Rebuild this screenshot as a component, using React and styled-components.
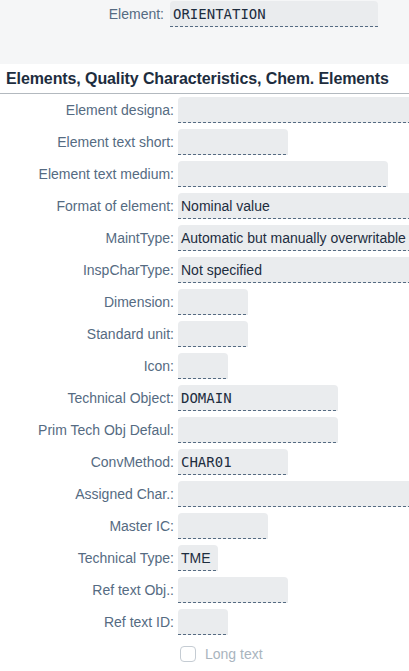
import React from "react";
import styled, { createGlobalStyle } from "styled-components";

const GlobalStyle = createGlobalStyle`
  html, body {
    margin: 0;
    padding: 0;
    background: #ffffff;
    font-family: "Liberation Sans", Arial, sans-serif;
    overflow: hidden;
  }
`;

const Page = styled.div`
  width: 409px;
  height: 671px;
  overflow: hidden;
  background: #ffffff;
`;

const Header = styled.div`
  background: #f5f6f7;
  height: 64px;
  padding-top: 1px;
  box-sizing: border-box;
`;

const SectionTitle = styled.div`
  height: 30px;
  box-sizing: border-box;
  border-bottom: 1px solid #b3b9bf;
  padding-left: 6px;
  display: flex;
  align-items: center;
  font-size: 16px;
  font-weight: bold;
  letter-spacing: -0.1px;
  color: #1d2d3e;
  white-space: nowrap;
`;

const Form = styled.div`
  display: flex;
  flex-direction: column;
  gap: 6px;
  padding-top: 3px;
`;

const Row = styled.div`
  display: flex;
  align-items: center;
  height: 26px;
  gap: ${(p) => p.$gap || 4}px;
`;

const Label = styled.div`
  width: ${(p) => p.$width || 174}px;
  flex-shrink: 0;
  text-align: right;
  font-size: 14px;
  color: #556b82;
  white-space: nowrap;
`;

const Field = styled.div`
  position: relative;
  flex-shrink: 0;
  width: ${(p) => p.$width}px;
  height: 26px;
  box-sizing: border-box;
  background: #eaecee;
  border-radius: 4px 4px 0 0;
  padding: 0 0 1px 3px;
  display: flex;
  align-items: center;
  font-size: 14px;
  color: #1d2d3e;
  white-space: nowrap;
  overflow: hidden;
  font-family: ${(p) =>
    p.$mono
      ? '"DejaVu Sans Mono", "Liberation Mono", monospace'
      : '"Liberation Sans", Arial, sans-serif'};

  &::after {
    content: "";
    position: absolute;
    left: 0;
    right: 0;
    bottom: 0;
    height: 1px;
    background: repeating-linear-gradient(
      to right,
      #556b82 0 3px,
      transparent 3px 5px
    );
  }
`;

const CheckRow = styled.div`
  display: flex;
  align-items: center;
  height: 26px;
  padding-left: 180px;
  gap: 9px;
`;

const CheckBox = styled.span`
  width: 14px;
  height: 14px;
  border: 1px solid #c5ccd3;
  border-radius: 4px;
  background: #ffffff;
`;

const CheckLabel = styled.span`
  font-size: 14px;
  color: #a9b4be;
`;

const rows = [
  { label: "Element designa:", width: 240 },
  { label: "Element text short:", width: 110 },
  { label: "Element text medium:", width: 210 },
  { label: "Format of element:", width: 240, value: "Nominal value" },
  { label: "MaintType:", width: 240, value: "Automatic but manually overwritable" },
  { label: "InspCharType:", width: 240, value: "Not specified" },
  { label: "Dimension:", width: 70 },
  { label: "Standard unit:", width: 70 },
  { label: "Icon:", width: 50 },
  { label: "Technical Object:", width: 160, value: "DOMAIN", mono: true },
  { label: "Prim Tech Obj Defaul:", width: 160 },
  { label: "ConvMethod:", width: 110, value: "CHAR01", mono: true },
  { label: "Assigned Char.:", width: 240 },
  { label: "Master IC:", width: 90 },
  { label: "Technical Type:", width: 40, value: "TME" },
  { label: "Ref text Obj.:", width: 110 },
  { label: "Ref text ID:", width: 50 },
];

export default function App() {
  return (
    <Page>
      <GlobalStyle />
      <Header>
        <Row $gap={6}>
          <Label $width={164}>Element:</Label>
          <Field $width={208} $mono>
            ORIENTATION
          </Field>
        </Row>
      </Header>
      <SectionTitle>Elements, Quality Characteristics, Chem. Elements</SectionTitle>
      <Form>
        {rows.map((r) => (
          <Row key={r.label}>
            <Label>{r.label}</Label>
            <Field $width={r.width} $mono={r.mono}>
              {r.value}
            </Field>
          </Row>
        ))}
        <CheckRow>
          <CheckBox />
          <CheckLabel>Long text</CheckLabel>
        </CheckRow>
      </Form>
    </Page>
  );
}
